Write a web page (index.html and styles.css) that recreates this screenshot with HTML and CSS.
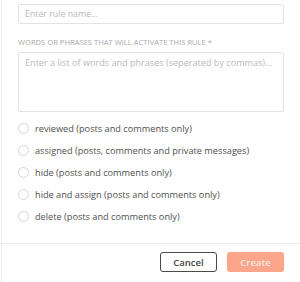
FILE: index.html
```html
<!DOCTYPE html>
<html lang="en">
<head>
    <meta charset="UTF-8">
    <meta name="viewport" content="width=device-width, initial-scale=1.0">
    <title>Create rule</title>
    <link rel="stylesheet" href="styles.css">
</head>
<body>
    <div class="modal">
        <div class="modal-body">
            <input class="field" type="text" placeholder="Enter rule name...">

            <label class="field-label">Words or phrases that will activate this rule *</label>
            <textarea class="field area" placeholder="Enter a list of words and phrases (seperated by commas)..."></textarea>

            <div class="options">
                <label class="option"><span class="radio"></span>reviewed (posts and comments only)</label>
                <label class="option"><span class="radio"></span>assigned (posts, comments and private messages)</label>
                <label class="option"><span class="radio"></span>hide (posts and comments only)</label>
                <label class="option"><span class="radio"></span>hide and assign (posts and comments only)</label>
                <label class="option"><span class="radio"></span>delete (posts and comments only)</label>
            </div>
        </div>

        <div class="modal-footer">
            <button class="btn btn-cancel">Cancel</button>
            <button class="btn btn-create">Create</button>
        </div>
    </div>
</body>
</html>
```

FILE: styles.css
```css
body {
    font-family: 'Open Sans', sans-serif;
    margin: 0;
    background: white;
}

.modal {
    margin-left: 1px;
    border-left: 1px solid #ececec;
    height: 282px;
    box-sizing: border-box;
}

.modal-body {
    padding: 4px 16px 0 16px;
}

.field {
    display: block;
    width: 100%;
    box-sizing: border-box;
    height: 20px;
    border: 1px solid #e2e2e2;
    border-radius: 2px;
    padding: 0 6px;
    font-family: 'Open Sans', sans-serif;
    font-size: 8.8px;
    color: #555;
    outline: none;
}

.field::placeholder {
    color: #b9b9b9;
}

.area {
    height: 60px;
    padding: 3px 1px 3px 6px;
    font-size: 9.1px;
    resize: none;
    overflow: hidden;
}

.field-label {
    display: block;
    margin: 13px 0 5px;
    font-size: 7.6px;
    text-transform: uppercase;
    color: #a9a9a9;
    line-height: 10px;
}

.options {
    padding-top: 5px;
}

.option {
    display: flex;
    align-items: center;
    height: 22px;
    font-size: 9.2px;
    color: #4f4f4f;
}

.radio {
    width: 9px;
    height: 9px;
    border: 1px solid #d6d6d6;
    border-radius: 50%;
    margin-right: 6px;
}

.modal-footer {
    margin-top: 16px;
    border-top: 1px solid #ececec;
    display: flex;
    justify-content: flex-end;
    gap: 10px;
    padding: 8px 16px 0;
}

.btn {
    width: 57px;
    height: 20px;
    border-radius: 3px;
    font-family: 'Open Sans', sans-serif;
    font-size: 9.5px;
    font-weight: 600;
    cursor: pointer;
}

.btn-cancel {
    background: white;
    border: 1px solid #4a4a4a;
    color: #444;
}

.btn-create {
    background: #fba58b;
    border: none;
    color: #fde7df;
}
```
